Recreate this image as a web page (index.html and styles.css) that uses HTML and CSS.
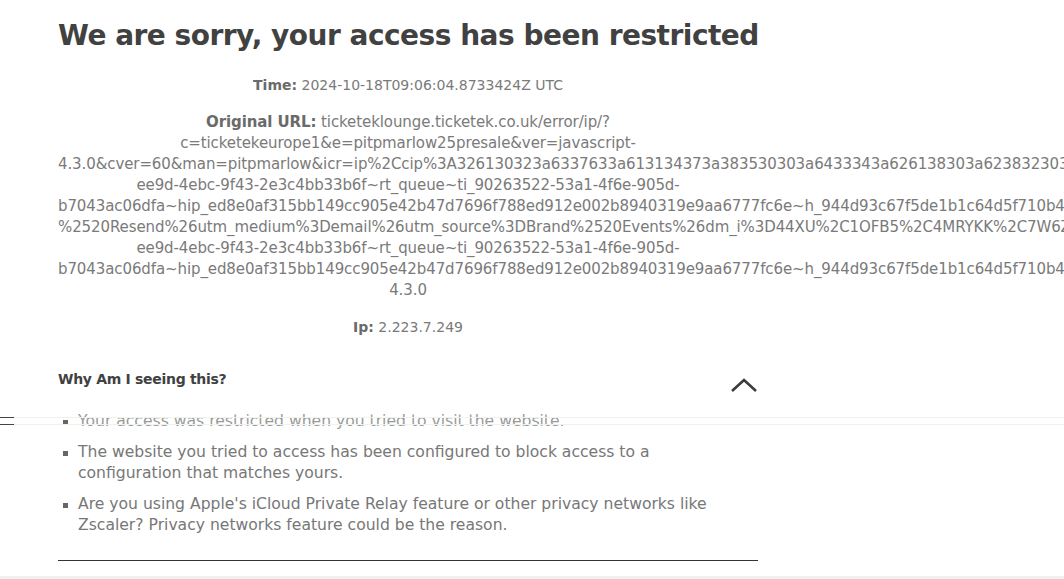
FILE: index.html
```html
<!DOCTYPE html>
<html lang="en">
<head>
<meta charset="utf-8">
<title>Access restricted</title>
<link rel="stylesheet" href="styles.css">
</head>
<body>
<div class="page">
  <main class="content">
    <h1 class="title">We are sorry, your access has been restricted</h1>
    <p class="info time"><b class="label">Time:</b> 2024-10-18T09:06:04.8733424Z UTC</p>
    <div class="info url">
      <div class="line"><b class="label">Original URL:</b> ticketeklounge.ticketek.co.uk/error/ip/?</div>
      <div class="line">c=ticketekeurope1&amp;e=pitpmarlow25presale&amp;ver=javascript-</div>
      <div class="line">4.3.0&amp;cver=60&amp;man=pitpmarlow&amp;icr=ip%2Ccip%3A326130323a6337633a613134373a383530303a6433343a626138303a623832303a3a35392d32333a3</div>
      <div class="line">ee9d-4ebc-9f43-2e3c4bb33b6f~rt_queue~ti_90263522-53a1-4f6e-905d-</div>
      <div class="line">b7043ac06dfa~hip_ed8e0af315bb149cc905e42b47d7696f788ed912e002b8940319e9aa6777fc6e~h_944d93c67f5de1b1c64d5f710b4bc2f3</div>
      <div class="line">%2520Resend%26utm_medium%3Demail%26utm_source%3DBrand%2520Events%26dm_i%3D44XU%2C1OFB5%2C4MRYKK%2C7W6ZU%2C1</div>
      <div class="line">ee9d-4ebc-9f43-2e3c4bb33b6f~rt_queue~ti_90263522-53a1-4f6e-905d-</div>
      <div class="line">b7043ac06dfa~hip_ed8e0af315bb149cc905e42b47d7696f788ed912e002b8940319e9aa6777fc6e~h_944d93c67f5de1b1c64d5f710b4bc2f3</div>
      <div class="line">4.3.0</div>
    </div>
    <p class="info ip"><b class="label">Ip:</b> 2.223.7.249</p>

    <section class="why">
      <div class="why-head">
        <h2 class="why-title">Why Am I seeing this?</h2>
        <svg class="chevron" width="28" height="16" viewBox="0 0 28 16" aria-hidden="true">
          <polyline points="2,14 14,3 26,14" fill="none" stroke="#3c3c3c" stroke-width="2.6"/>
        </svg>
      </div>
      <ul class="reasons">
        <li class="reason faded">Your access was restricted when you tried to visit the website.</li>
        <li class="reason">The website you tried to access has been configured to block access to a configuration that matches yours.</li>
        <li class="reason">Are you using Apple's iCloud Private Relay feature or other privacy networks like Zscaler? Privacy networks feature could be the reason.</li>
      </ul>
    </section>
    <hr class="rule">
  </main>
  <div class="overlay-bar"><span class="menu-glyph"></span></div>
  <div class="footer-band"></div>
</div>
</body>
</html>
```

FILE: styles.css
```css
html, body {
  margin: 0;
  padding: 0;
  overflow: hidden;
  background: #ffffff;
}

body {
  font-family: "DejaVu Sans", "Liberation Sans", sans-serif;
  color: #7a7a7a;
}

.page {
  position: relative;
  min-height: 579px;
}

.content {
  width: 700px;
  margin-left: 58px;
  padding-top: 14px;
}

.title {
  margin: 0;
  font-size: 28px;
  line-height: 44px;
  letter-spacing: -0.5px;
  font-weight: bold;
  color: #414141;
  white-space: nowrap;
}

.info {
  margin: 0;
  font-size: 14px;
  line-height: 21px;
  text-align: center;
  color: #7a7a7a;
}

.time {
  margin-top: 17px;
}

.label {
  color: #6a6a6a;
  font-weight: bold;
}

.url {
  margin-top: 16px;
  font-size: 15px;
  letter-spacing: -0.1px;
}

.line {
  white-space: nowrap;
}

.ip {
  margin-top: 16px;
}

.why {
  margin-top: 27px;
}

.why-head {
  display: flex;
  justify-content: space-between;
  align-items: center;
  height: 28px;
}

.why-title {
  margin: 0;
  font-size: 14px;
  letter-spacing: -0.3px;
  font-weight: bold;
  color: #414141;
}

.chevron {
  display: block;
  margin-top: 12px;
}

.reasons {
  list-style: none;
  margin: 18px 0 0;
  padding: 0 0 0 20px;
}

.reason {
  position: relative;
  font-size: 15.6px;
  line-height: 21px;
  color: #777777;
  margin-bottom: 10px;
  max-width: 640px;
}

.reason::before {
  content: "";
  position: absolute;
  left: -15px;
  top: 9px;
  width: 5px;
  height: 5px;
  background: #666666;
}

.reason.faded {
  color: #9a9a9a;
}

.rule {
  margin: 24px 0 0;
  border: 0;
  border-top: 1px solid #333333;
  height: 0;
}

.overlay-bar {
  position: absolute;
  left: 0;
  right: 0;
  top: 417px;
  height: 6px;
  border-top: 1px solid #eef3ec;
  border-bottom: 1px solid #eef3ec;
}

.menu-glyph {
  position: absolute;
  left: 0;
  top: -1px;
  width: 14px;
  height: 6px;
  border-top: 1px solid #444444;
  border-bottom: 1px solid #444444;
}

.footer-band {
  position: absolute;
  left: 0;
  right: 0;
  bottom: 0;
  height: 3px;
  background: #f0f0f0;
}
```
